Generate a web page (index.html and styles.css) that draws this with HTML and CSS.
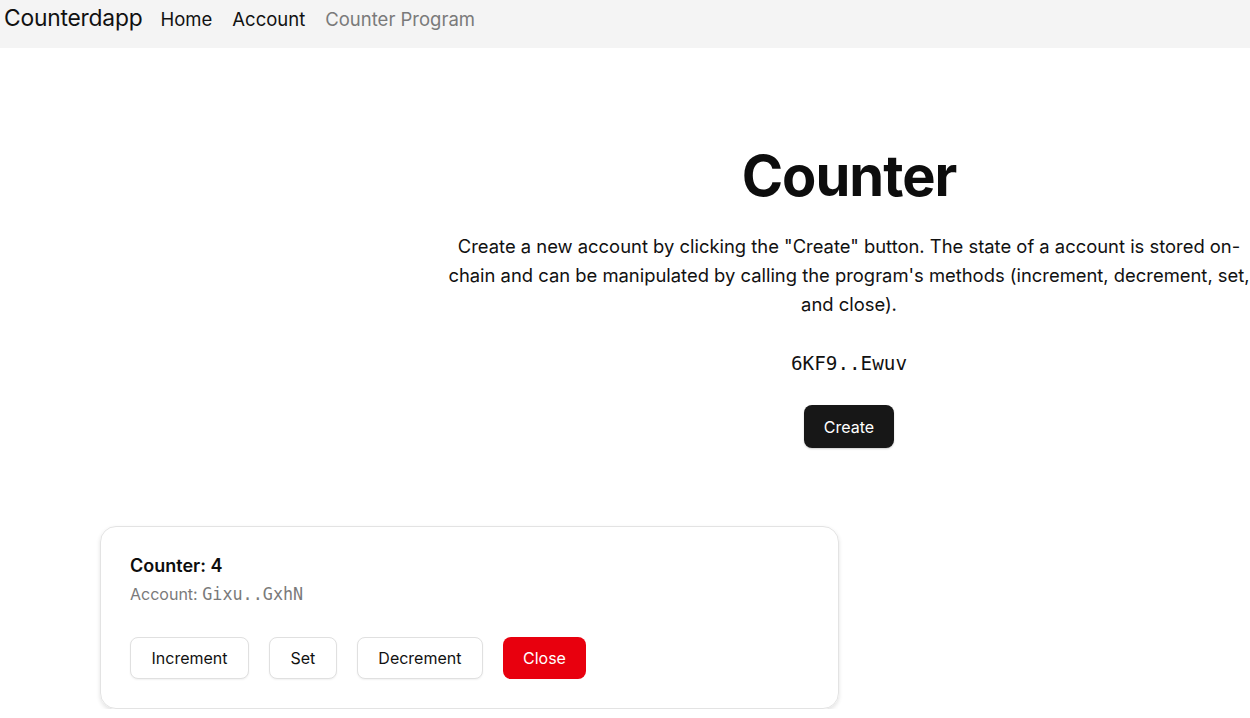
FILE: index.html
```html
<!DOCTYPE html>
<html lang="en">
<head>
<meta charset="utf-8">
<title>Counterdapp</title>
<link rel="stylesheet" href="styles.css">
</head>
<body>
<header class="navbar">
  <a class="brand">Counterdapp</a>
  <nav class="menu">
    <a class="link">Home</a>
    <a class="link">Account</a>
    <a class="link active">Counter Program</a>
  </nav>
</header>
<main class="main">
  <section class="hero">
    <div class="hero-inner">
      <h1 class="title">Counter</h1>
      <p class="lead">Create a new account by clicking the "Create" button. The state of a account is stored on-chain and can be manipulated by calling the program's methods (increment, decrement, set, and close).</p>
      <p class="address">6KF9..Ewuv</p>
      <button class="btn btn-dark">Create</button>
    </div>
  </section>
  <section class="cards">
    <div class="card">
      <h2 class="card-title">Counter: 4</h2>
      <p class="card-sub">Account: <span class="mono">Gixu..GxhN</span></p>
      <div class="actions">
        <button class="btn btn-outline">Increment</button>
        <button class="btn btn-outline">Set</button>
        <button class="btn btn-outline">Decrement</button>
        <button class="btn btn-red">Close</button>
      </div>
    </div>
  </section>
</main>
</body>
</html>
```
FILE: styles.css
```css
* { box-sizing: border-box; }
html, body { margin: 0; padding: 0; }
body {
  font-family: Inter, "Noto Sans", sans-serif;
  color: #111;
  background: #fff;
  width: 1250px;
  overflow: hidden;
}
.navbar {
  height: 48px;
  background: #f4f4f4;
  display: flex;
  align-items: flex-start;
  padding: 4px 0 0 4px;
}
.brand {
  font-size: 22.8px;
  line-height: 28px;
  color: #111;
  letter-spacing: -0.2px;
}
.menu {
  display: flex;
  gap: 20px;
  margin-left: 18px;
  padding-top: 2px;
}
.link {
  font-size: 18.5px;
  line-height: 26px;
  color: #111;
}
.link.active { color: #7a7a7a; }

.hero {
  display: flex;
  justify-content: flex-end;
  padding-top: 96px;
}
.hero-inner {
  width: 802px;
  text-align: center;
}
.title {
  margin: 0;
  font-size: 56px;
  line-height: 64px;
  font-weight: 700;
  letter-spacing: -1px;
  color: #0d0d0d;
}
.lead {
  margin: 24px 0 0;
  font-size: 18.4px;
  line-height: 29px;
  color: #111;
}
.address {
  margin: 33px 0 0;
  font-family: "DejaVu Sans Mono", monospace;
  font-size: 19.3px;
  line-height: 24px;
  color: #111;
}
.btn {
  font-family: Inter, "Noto Sans", sans-serif;
  font-size: 16px;
  border-radius: 8px;
  height: 43px;
  padding: 0 20px;
  cursor: pointer;
}
.btn-dark {
  margin-top: 29px;
  background: #171717;
  color: #fff;
  border: none;
  box-shadow: 0 1px 2px rgba(0,0,0,0.2);
}
.cards {
  padding: 78px 0 0 100px;
}
.card {
  width: 739px;
  border: 1px solid #e3e3e3;
  border-radius: 16px;
  box-shadow: 0 2px 4px rgba(0,0,0,0.12);
  padding: 26px 29px 29px;
}
.card-title {
  margin: 0;
  font-size: 18px;
  line-height: 26px;
  font-weight: 600;
  color: #0d0d0d;
}
.card-sub {
  margin: 4px 0 0;
  font-size: 16px;
  line-height: 22px;
  color: #7a7a7a;
}
.mono { font-family: "DejaVu Sans Mono", monospace; font-size: 16.8px; }
.actions {
  display: flex;
  gap: 20px;
  margin-top: 32px;
}
.btn-outline {
  height: 42px;
  padding: 0 20.5px;
  background: #fff;
  border: 1px solid #e0e0e0;
  color: #111;
  box-shadow: 0 1px 2px rgba(0,0,0,0.06);
}
.btn-red {
  height: 42px;
  background: #e8000e;
  color: #fff;
  border: none;
}
```
